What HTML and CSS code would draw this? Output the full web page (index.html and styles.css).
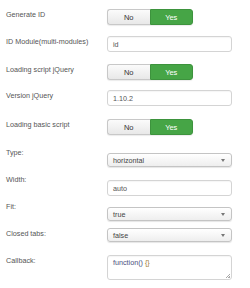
FILE: index.html
```html
<!DOCTYPE html>
<html lang="en">
<head>
  <meta charset="UTF-8" />
  <title>Module options</title>
  <link rel="stylesheet" href="styles.css">
</head>
<body>

  <form class="options">
    <div class="row r1">
      <label>Generate ID</label>
      <div class="toggle"><span class="no">No</span><span class="yes">Yes</span></div>
    </div>
    <div class="row r2">
      <label>ID Module(multi-modules)</label>
      <div class="field">id</div>
    </div>
    <div class="row r3">
      <label>Loading script jQuery</label>
      <div class="toggle"><span class="no">No</span><span class="yes">Yes</span></div>
    </div>
    <div class="row r4">
      <label>Version jQuery</label>
      <div class="field">1.10.2</div>
    </div>
    <div class="row r5">
      <label>Loading basic script</label>
      <div class="toggle"><span class="no">No</span><span class="yes">Yes</span></div>
    </div>
    <div class="row r6 top">
      <label>Type:</label>
      <div class="select">horizontal</div>
    </div>
    <div class="row r7 top">
      <label>Width:</label>
      <div class="field">auto</div>
    </div>
    <div class="row r8 top">
      <label>Fit:</label>
      <div class="select">true</div>
    </div>
    <div class="row r9">
      <label>Closed tabs:</label>
      <div class="select">false</div>
    </div>
    <div class="row r10">
      <label>Callback:</label>
      <div class="field area">function() <span class="brace">{}</span></div>
    </div>
  </form>

</body>
</html>
```

FILE: styles.css
```css
* { margin: 0; padding: 0; box-sizing: border-box; }

body {
  font-family: 'Liberation Sans', Arial, sans-serif;
  font-size: 7.2px;
  color: #555;
  background: #fff;
}

.options {
  padding: 9px 0 0 6px;
}

.row {
  display: flex;
  align-items: flex-start;
}

.row label {
  width: 101px;
  line-height: 8px;
  margin-top: 2px;
  color: #555;
}

.row.top label {
  margin-top: -4px;
}

.r2 { margin-top: 11px; }
.r3 { margin-top: 12px; }
.r4 { margin-top: 10px; }
.r5 { margin-top: 13px; }
.r6 { margin-top: 18px; }
.r7 { margin-top: 13px; }
.r8 { margin-top: 11px; }
.r9 { margin-top: 7px; }
.r10 { margin-top: 13px; }

.toggle {
  display: flex;
  width: 86px;
  height: 16px;
  border-radius: 3px;
  box-shadow: 0 1px 1px rgba(0, 0, 0, 0.08);
}

.toggle span {
  flex: 1;
  display: flex;
  align-items: center;
  justify-content: center;
  font-size: 7.5px;
}

.toggle .no {
  color: #333;
  background: linear-gradient(#fbfbfb, #e8e8e8);
  border: 1px solid #c8c8c8;
  border-right: none;
  border-radius: 3px 0 0 3px;
}

.toggle .yes {
  color: #fff;
  background: #46a546;
  border: 1px solid #3d933d;
  border-radius: 0 3px 3px 0;
}

.field {
  width: 125px;
  height: 16px;
  padding: 0 5px;
  border: 1px solid #d4d4d4;
  border-radius: 3px;
  display: flex;
  align-items: center;
  color: #555;
  box-shadow: inset 0 1px 1px rgba(0, 0, 0, 0.04);
}

.field.area {
  height: 25px;
  align-items: flex-start;
  padding-top: 2px;
  color: #4a5080;
  position: relative;
}

.field.area::after {
  content: "";
  position: absolute;
  right: 1px;
  bottom: 1px;
  width: 4px;
  height: 4px;
  background: linear-gradient(135deg, transparent 45%, #aaa 45%, #aaa 55%, transparent 55%, transparent 75%, #aaa 75%);
}

.brace {
  color: #a07a30;
  margin-left: 2px;
}

.select {
  width: 125px;
  height: 14px;
  padding: 0 5px;
  border: 1px solid #c4c4c4;
  border-radius: 3px;
  display: flex;
  align-items: center;
  color: #444;
  background: linear-gradient(#ffffff, #eeeeee);
  box-shadow: 0 1px 1px rgba(0, 0, 0, 0.1);
  position: relative;
}

.select::after {
  content: "";
  position: absolute;
  right: 6px;
  top: 5px;
  border-left: 2px solid transparent;
  border-right: 2px solid transparent;
  border-top: 3px solid #777;
}
```
